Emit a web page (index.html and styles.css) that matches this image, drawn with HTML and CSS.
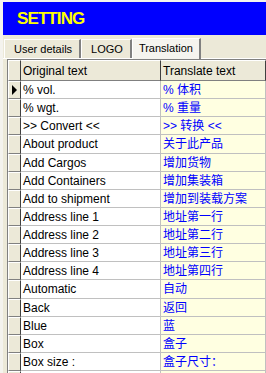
FILE: index.html
```html
<!DOCTYPE html>
<html lang="en">
<head>
    <meta charset="UTF-8">
    <title>Setting</title>
    <link rel="stylesheet" href="styles.css">
</head>
<body>
    <div class="window">
        <div class="banner">SETTING</div>

        <div class="tabs">
            <div class="tab">User details</div>
            <div class="tab">LOGO</div>
            <div class="tab active">Translation</div>
        </div>

        <div class="panel">
            <div class="grid">
                <div class="ind head"></div>
                <div class="cell head">Original text</div>
                <div class="cell head">Translate text</div>

                <div class="ind current"><span class="arrow"></span></div>
                <div class="cell orig">% vol.</div>
                <div class="cell tr">% 体积</div>

                <div class="ind"></div>
                <div class="cell orig">% wgt.</div>
                <div class="cell tr">% 重量</div>

                <div class="ind"></div>
                <div class="cell orig">&gt;&gt; Convert &lt;&lt;</div>
                <div class="cell tr">&gt;&gt; 转换 &lt;&lt;</div>

                <div class="ind"></div>
                <div class="cell orig">About product</div>
                <div class="cell tr">关于此产品</div>

                <div class="ind"></div>
                <div class="cell orig">Add Cargos</div>
                <div class="cell tr">增加货物</div>

                <div class="ind"></div>
                <div class="cell orig">Add Containers</div>
                <div class="cell tr">增加集装箱</div>

                <div class="ind"></div>
                <div class="cell orig">Add to shipment</div>
                <div class="cell tr">增加到装载方案</div>

                <div class="ind"></div>
                <div class="cell orig">Address line 1</div>
                <div class="cell tr">地址第一行</div>

                <div class="ind"></div>
                <div class="cell orig">Address line 2</div>
                <div class="cell tr">地址第二行</div>

                <div class="ind"></div>
                <div class="cell orig">Address line 3</div>
                <div class="cell tr">地址第三行</div>

                <div class="ind"></div>
                <div class="cell orig">Address line 4</div>
                <div class="cell tr">地址第四行</div>

                <div class="ind"></div>
                <div class="cell orig">Automatic</div>
                <div class="cell tr">自动</div>

                <div class="ind"></div>
                <div class="cell orig">Back</div>
                <div class="cell tr">返回</div>

                <div class="ind"></div>
                <div class="cell orig">Blue</div>
                <div class="cell tr">蓝</div>

                <div class="ind"></div>
                <div class="cell orig">Box</div>
                <div class="cell tr">盒子</div>

                <div class="ind"></div>
                <div class="cell orig">Box size :</div>
                <div class="cell tr">盒子尺寸：</div>

                <div class="ind"></div>
                <div class="cell orig"></div>
                <div class="cell tr">长度</div>
            </div>
        </div>
    </div>
</body>
</html>
```

FILE: styles.css
```css
body {
    margin: 0;
    font-family: "Liberation Sans", Arial, sans-serif;
    font-size: 11px;
    background: #ece9d8;
    overflow: hidden;
}

.window {
    height: 373px;
    border-top: 2px solid #f4f3ee;
    border-left: 3px solid #f4f3ee;
    overflow: hidden;
}

.banner {
    height: 33px;
    background: #0000ff;
    color: #ffff00;
    font-weight: bold;
    font-size: 17px;
    letter-spacing: -0.9px;
    line-height: 33px;
    padding-left: 14px;
}

.tabs {
    display: flex;
    align-items: flex-end;
    height: 21px;
    padding-left: 1px;
    margin-top: 2px;
}

.tab {
    height: 18px;
    line-height: 19px;
    padding: 0 7px 0 9px;
    border: 1px solid #fff;
    border-right: 2px solid #808080;
    border-bottom: none;
    background: #ece9d8;
    color: #000;
}

.tab.active {
    height: 20px;
    line-height: 18px;
    padding: 0 6px;
    background: #f5f4ef;
    position: relative;
    top: 1px;
}

.panel {
    border-top: 1px solid #fff;
    padding-left: 4px;
}

.grid {
    display: grid;
    grid-template-columns: 13px 140px 1fr;
    grid-auto-rows: 18.13px;
    grid-template-rows: 21px;
    border-left: 1px solid #808080;
    border-top: 1px solid #808080;
}

.ind {
    background: #ece9d8;
    border-top: 1px solid #fff;
    border-left: 1px solid #fff;
    border-right: 1px solid #404040;
    border-bottom: 1px solid #808080;
    display: flex;
    align-items: center;
}

.cell {
    padding-left: 2px;
    line-height: 18px;
    font-size: 12px;
    border-right: 1px solid #c0c0c0;
    border-bottom: 1px solid #c0c0c0;
    white-space: nowrap;
    overflow: hidden;
}

.cell.head {
    background: #ece9d8;
    line-height: 20px;
    border-top: 1px solid #fff;
    border-right: 1px solid #404040;
    border-bottom: 1px solid #808080;
}

.orig {
    background: #fff;
}

.tr {
    background: #ffffe1;
    color: #0000ff;
    font-family: "Liberation Sans", "Noto Sans CJK SC", sans-serif;
    font-size: 12px;
}

.arrow {
    display: block;
    margin-left: 3px;
    border-left: 5px solid #000;
    border-top: 5px solid transparent;
    border-bottom: 5px solid transparent;
}
```
